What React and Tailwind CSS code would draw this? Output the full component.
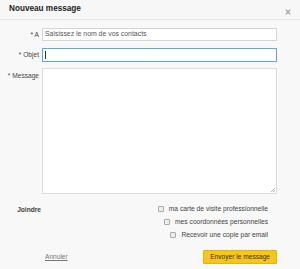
export default function App() {
  return (
    <div
      className="w-[300px] h-[269px] bg-[#f8f8f8] text-[#333] overflow-hidden"
      style={{ fontFamily: '"Liberation Sans", Arial, sans-serif' }}
    >
      <div className="h-[20px] flex items-center justify-between pl-[9px] pr-[9px] border-b border-[#e6e6e6] bg-[#f7f7f7]">
        <h1 className="text-[8.2px] font-bold text-[#222] leading-none">Nouveau message</h1>
        <svg className="mt-[4px]" width="6" height="6" viewBox="0 0 6 6">
          <path d="M0.8 0.8L5.2 5.2M5.2 0.8L0.8 5.2" stroke="#a8a8a8" strokeWidth="1.3" />
        </svg>
      </div>

      <div className="pr-[23px] pt-[8px]">
        <div className="flex items-center">
          <div className="w-[42px] text-right pr-[3px] text-[6.6px] text-[#444]">* A</div>
          <div className="flex-1 h-[13px] border border-[#d6d6d6] bg-white flex items-center px-[2px]">
            <span className="text-[6.9px] text-[#555]">Saisissez le nom de vos contacts</span>
          </div>
        </div>

        <div className="flex items-center mt-[7px]">
          <div className="w-[42px] text-right pr-[3px] text-[6.6px] text-[#444]">* Objet</div>
          <div className="flex-1 h-[14px] border border-[#5fa8de] bg-white flex items-center px-[2px]">
            <span className="w-px h-[8px] bg-[#333]" />
          </div>
        </div>

        <div className="flex items-start mt-[6px]">
          <div className="w-[42px] text-right pr-[3px] text-[6.6px] text-[#444] pt-[3px]">* Message</div>
          <div className="flex-1 h-[126px] border border-[#dcdcdc] bg-white relative">
            <svg className="absolute right-[1px] bottom-[1px]" width="5" height="5" viewBox="0 0 5 5">
              <path d="M1 5L5 1M3 5L5 3" stroke="#999" strokeWidth="0.7" />
            </svg>
          </div>
        </div>

        <div className="flex items-start mt-[11px]">
          <div className="w-[42px] text-right pr-[1px] text-[6.6px] font-bold text-[#3d3d3d]">Joindre</div>
          <div className="flex-1 flex flex-col items-end pr-[9px] gap-[6px]">
            {[
              "ma carte de visite professionnelle",
              "mes coordonnées personnelles",
              "Recevoir une copie par email",
            ].map((t) => (
              <div key={t} className="flex items-center gap-[5px]">
                <span className="w-[6px] h-[6px] border border-[#aaa] rounded-[1px] bg-[#eee]" />
                <span className="text-[6.7px] text-[#444] leading-[7px]">{t}</span>
              </div>
            ))}
          </div>
        </div>

        <div className="flex items-center justify-between mt-[12px] pl-[45px]">
          <span className="text-[6.6px] text-[#777] underline">Annuler</span>
          <button className="h-[14px] px-[6px] bg-[#f7c51c] border border-[#e8b400] rounded-[1px] text-[6.6px] text-[#333]">
            Envoyer le message
          </button>
        </div>
      </div>
    </div>
  );
}
